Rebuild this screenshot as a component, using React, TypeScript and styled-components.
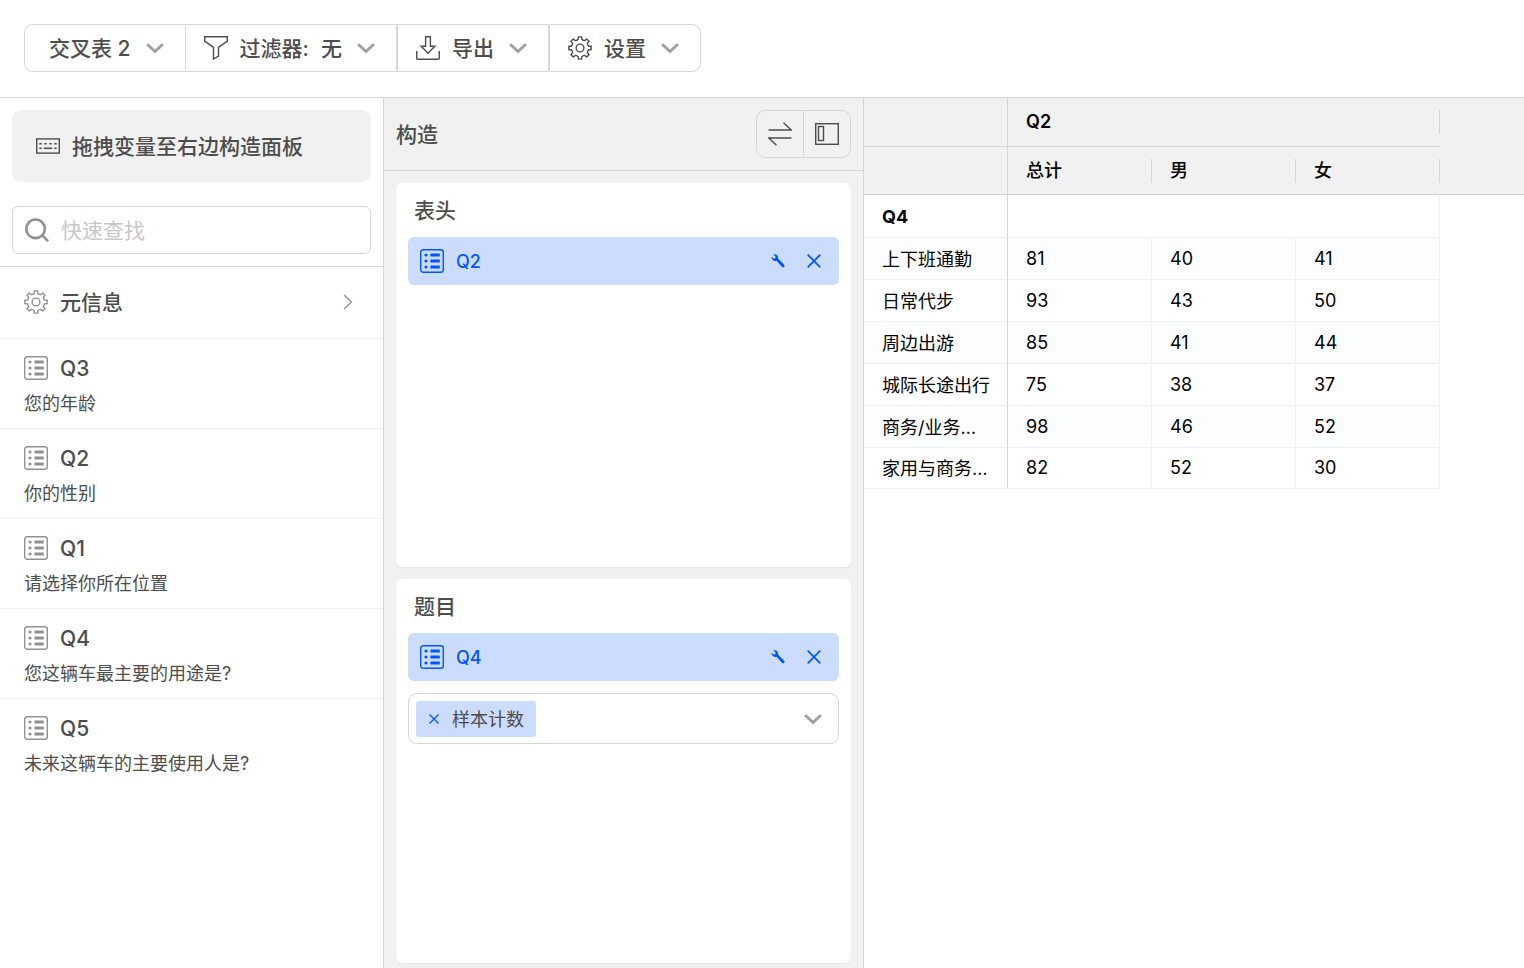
import React from "react";
import styled, { createGlobalStyle } from "styled-components";

const line = "#d6d6d6";
const softLine = "#f0f0f0";
const panelGrey = "#f1f1f1";
const ink = "#4d4d4d";
const muted = "#919191";
const accent = "#0055ff";
const accentSoft = "#ccdcff";

const GlobalStyle = createGlobalStyle`
  *, *::before, *::after { box-sizing: border-box; }
  body {
    margin: 0;
    background: #fff;
    color: ${ink};
    font-family: Inter, "Noto Sans CJK SC", sans-serif;
    font-size: 18px;
    line-height: 24px;
  }
  button, input { font: inherit; color: inherit; }
  button { margin: 0; padding: 0; border: 0; background: none; cursor: pointer; }
  svg { display: block; flex: none; }
`;

/* ---------- icons ---------- */

const gearPath = (() => {
  const teeth = 8;
  const parts: string[] = [];
  const point = (angle: number, radius: number) =>
    `${(12 + radius * Math.sin(angle)).toFixed(2)} ${(12 - radius * Math.cos(angle)).toFixed(2)}`;
  for (let i = 0; i < teeth; i++) {
    const a = (i * 2 * Math.PI) / teeth;
    parts.push(`${i ? "L" : "M"}${point(a - 0.2, 8.9)}`);
    parts.push(`L${point(a - 0.15, 11.3)}`);
    parts.push(`L${point(a + 0.15, 11.3)}`);
    parts.push(`L${point(a + 0.2, 8.9)}`);
    const next = a + (2 * Math.PI) / teeth;
    parts.push(`Q${point((a + next) / 2, 7.9)} ${point(next - 0.2, 8.9)}`);
  }
  return parts.join("") + "Z";
})();

const GearIcon = () => (
  <svg width="24" height="24" viewBox="0 0 24 24" fill="none" stroke="currentColor" strokeWidth="1.400" aria-hidden="true">
    <path d={gearPath} strokeLinejoin="round" />
    <circle cx="12" cy="12" r="3.900" />
  </svg>
);

const ChevronIcon = () => (
  <svg width="18" height="12" viewBox="0 0 18 12" fill="none" stroke="#a0a0a0" strokeWidth="3" aria-hidden="true">
    <path d="M2 3L9 9.500L16 3" strokeLinecap="round" />
  </svg>
);

const FunnelIcon = () => (
  <svg width="24" height="24" viewBox="0 0 24 24" fill="none" stroke="currentColor" strokeWidth="1.400" aria-hidden="true">
    <path d="M.7 .7H23.300V5.100L14.500 11.400V20L9.500 23V11.400L.7 5.100Z" />
  </svg>
);

const DownloadIcon = () => (
  <svg width="24" height="24" viewBox="0 0 24 24" fill="none" stroke="currentColor" strokeWidth="1.400" aria-hidden="true">
    <path d="M9.600 .7H14.400V10.200H18.800L12 17.200L5.200 10.200H9.600Z" />
    <path d="M.7 15V22.300Q.7 23.300 1.700 23.300H22.300Q23.300 23.300 23.300 22.300V15" />
  </svg>
);

const KeyboardIcon = () => (
  <svg width="24" height="16" viewBox="0 0 24 16" fill="none" stroke="currentColor" strokeWidth="1.400" aria-hidden="true">
    <rect x=".7" y=".9" width="22.600" height="14.200" />
    <path d="M3.300 5.700H5.700M8.300 5.700H10.700M13.300 5.700H15.700M18.300 5.700H20.700M3.300 10.200H5.700M7.800 10.200H16.200M18.300 10.200H20.700" />
  </svg>
);

const SearchIcon = () => (
  <svg width="24" height="24" viewBox="0 0 24 24" fill="none" stroke={muted} strokeWidth="2.600" aria-hidden="true">
    <circle cx="10.600" cy="10.800" r="9.300" />
    <path d="M17.200 17.400L23.200 23.200" />
  </svg>
);

const ListIcon = () => (
  <svg width="24" height="24" viewBox="0 0 24 24" fill="none" stroke="currentColor" aria-hidden="true">
    <rect x=".7" y=".7" width="22.600" height="22.600" rx="2.600" strokeWidth="1.400" />
    <g fill="currentColor" stroke="none">
      <circle cx="6" cy="6" r="1.600" />
      <circle cx="6" cy="12" r="1.600" />
      <circle cx="6" cy="18" r="1.600" />
      <rect x="10.400" y="4.600" width="9.400" height="2.800" rx=".5" />
      <rect x="10.400" y="10.600" width="9.400" height="2.800" rx=".5" />
      <rect x="10.400" y="16.600" width="9.400" height="2.800" rx=".5" />
    </g>
  </svg>
);

const ArrowRightIcon = () => (
  <svg width="10" height="16" viewBox="0 0 10 16" fill="none" stroke={muted} strokeWidth="1.400" aria-hidden="true">
    <path d="M1 1L8.500 8L1 15" />
  </svg>
);

const SwapIcon = () => (
  <svg width="24" height="24" viewBox="0 0 24 24" fill="none" stroke="currentColor" strokeWidth="1.400" aria-hidden="true">
    <path d="M.5 8H23.200L15.500 .8M23.500 16H.8L8.500 23.200" />
  </svg>
);

const PanelIcon = () => (
  <svg width="24" height="24" viewBox="0 0 24 24" fill="none" stroke="currentColor" aria-hidden="true">
    <rect x=".7" y="1.700" width="22.600" height="20.600" strokeWidth="1.400" />
    <rect x="3.500" y="4.500" width="5" height="14" strokeWidth="1.400" />
  </svg>
);

const WrenchIcon = () => (
  <svg width="14" height="14" viewBox="0 0 14 14" aria-hidden="true">
    <path
      d="M2.300 .6Q4.600 -.2 6.200 1.400Q7.400 2.800 7 4.600L13.100 10.700Q14 11.700 13.200 12.800Q12.200 13.800 11.100 12.900L5.500 6.700Q3.600 7.300 1.900 6Q.2 4.700 .4 2.700L2.500 4.400L4.300 4.200L4.500 2.400Z"
      fill="currentColor"
    />
  </svg>
);

const CrossIcon = ({ size }: { size: number }) => (
  <svg width={size} height={size} viewBox="0 0 14 14" fill="none" stroke="currentColor" strokeWidth="1.700" aria-hidden="true">
    <path d="M.7 .7L13.300 13.300M13.300 .7L.7 13.300" />
  </svg>
);

/* ---------- layout ---------- */

const Page = styled.div`
  display: flex;
  flex-direction: column;
  min-height: 100vh;
`;

/* Optical centring of text beside an icon. */
const Label = styled.span`
  padding-top: 2px;
`;

const TopBar = styled.header`
  display: flex;
  padding: 24px 24px 25px;
  border-bottom: 1px solid ${line};
`;

const ToolButton = styled.button<{ $wide?: boolean; $joined?: boolean }>`
  display: flex;
  align-items: center;
  gap: 12px;
  height: 48px;
  padding: 0 21px 0 ${(p) => (p.$wide ? 24 : 18)}px;
  border: 1px solid ${line};
  border-left-width: ${(p) => (p.$joined ? 0 : 1)}px;
  font-size: 21px;
  font-weight: 500;
  white-space: nowrap;

  &:first-child { border-radius: 9px 0 0 9px; }
  &:last-child { border-radius: 0 9px 9px 0; }
  > svg:last-child { margin-left: 3px; }
`;

const Columns = styled.main`
  display: flex;
  flex: 1;
`;

const Sidebar = styled.aside`
  flex: none;
  width: 384px;
  border-right: 1px solid ${line};
`;

const SidebarTop = styled.div`
  display: flex;
  flex-direction: column;
  gap: 24px;
  padding: 12px;
  border-bottom: 1px solid ${line};
`;

const Hint = styled.div`
  display: flex;
  align-items: center;
  gap: 12px;
  height: 72px;
  padding: 0 24px;
  border-radius: 9px;
  background: ${panelGrey};
  font-size: 21px;
  font-weight: 500;
`;

const SearchBox = styled.label`
  display: flex;
  align-items: center;
  gap: 12px;
  height: 48px;
  padding: 0 12px;
  border: 1px solid ${line};
  border-radius: 6px;
`;

const SearchInput = styled.input`
  flex: 1;
  min-width: 0;
  padding: 2px 0 0;
  border: 0;
  outline: 0;
  background: none;
  font-size: 21px;
  line-height: 30px;
  &::placeholder { color: #c8c8c8; opacity: 1; }
`;

const MetaRow = styled.button`
  display: flex;
  align-items: center;
  gap: 12px;
  width: 100%;
  height: 72px;
  padding: 0 30px 1px 24px;
  border-bottom: 1px solid ${softLine};
  font-size: 21px;
  font-weight: 500;
  > svg:first-child { color: ${muted}; }
  > svg:last-child { margin-left: auto; }
`;

const QuestionList = styled.ul`
  margin: 0;
  padding: 0;
  list-style: none;
`;

const QuestionItem = styled.li`
  padding: 14px 24px 12px;
  border-bottom: 1px solid ${softLine};
  &:last-child { border-bottom: 0; }
`;

const QuestionName = styled.div`
  display: flex;
  align-items: center;
  gap: 12px;
  height: 30px;
  margin-bottom: 9px;
  font-size: 21px;
  font-weight: 500;
  > svg { color: ${muted}; }
`;

const Builder = styled.section`
  display: flex;
  flex-direction: column;
  flex: none;
  width: 480px;
  border-right: 1px solid ${line};
  background: ${panelGrey};
`;

const BuilderHeader = styled.div`
  display: flex;
  align-items: center;
  justify-content: space-between;
  padding: 12px;
  border-bottom: 1px solid ${line};
`;

const Heading = styled.h2`
  margin: 0;
  padding-top: 2px;
  font-size: 21px;
  font-weight: 500;
  line-height: 28px;
`;

const IconPair = styled.div`
  display: flex;
  height: 48px;
  border: 1px solid ${line};
  border-radius: 9px;
`;

const PairButton = styled.button`
  display: flex;
  align-items: center;
  justify-content: center;
  width: 46px;
  & + & {
    width: 47px;
    border-left: 1px solid ${line};
  }
`;

const Cards = styled.div`
  display: flex;
  flex: 1;
  flex-direction: column;
  gap: 12px;
  padding: 12px 12px 5px;
`;

const Card = styled.section`
  display: flex;
  flex: 1;
  flex-direction: column;
  min-height: 384px;
  padding: 12px;
  border-radius: 6px;
  background: #fff;
  box-shadow: 0 1px 2px rgba(0, 0, 0, 0.06);
  gap: 12px;
`;

const CardTitle = styled(Heading)`
  padding-left: 6px;
`;

const Pill = styled.div`
  display: flex;
  align-items: center;
  gap: 12px;
  height: 48px;
  padding: 0 13px 0 12px;
  border-radius: 6px;
  background: ${accentSoft};
  color: ${accent};
  font-weight: 500;
`;

const PillName = styled(Label)`
  flex: 1;
`;

const PillAction = styled.button`
  display: grid;
  place-items: center;
  width: 24px;
  height: 24px;
`;

const TagBox = styled.div`
  display: flex;
  align-items: center;
  justify-content: space-between;
  padding: 7px 16px 6px 7px;
  border: 1px solid ${line};
  border-radius: 9px;
`;

const Tag = styled.span`
  display: flex;
  align-items: center;
  gap: 12px;
  height: 36px;
  padding: 0 12px;
  border-radius: 3px;
  background: ${accentSoft};
  > button {
    display: grid;
    place-items: center;
    width: 12px;
    height: 24px;
    color: ${accent};
  }
`;

/* ---------- result table ---------- */

const Results = styled.section`
  flex: 1;
  min-width: 0;
`;

const Table = styled.table`
  width: 100%;
  table-layout: fixed;
  border-collapse: separate;
  border-spacing: 0;
  color: #000;
`;

const DataCol = styled.col`
  width: 144px;
`;

const HeadCell = styled.th<{ $stub?: boolean; $tall?: boolean; $rest?: boolean }>`
  height: ${(p) => (p.$tall ? 49 : 48)}px;
  padding: 0 18px;
  border-bottom: 1px solid ${line};
  border-right: ${(p) => (p.$stub ? `1px solid ${line}` : "0")};
  background: ${(p) =>
    p.$stub || p.$rest
      ? panelGrey
      : `linear-gradient(${line}, ${line}) right center / 1px 24px no-repeat ${panelGrey}`};
  font-weight: ${(p) => (p.$tall ? 600 : 500)};
  text-align: left;
`;

const RowHead = styled.th<{ $strong?: boolean; $tint?: boolean }>`
  height: ${(p) => (p.$strong ? 43 : 42)}px;
  padding: 2px 0 0 18px;
  border-right: 1px solid ${line};
  border-bottom: 1px solid ${softLine};
  background: ${(p) => (p.$tint ? "#fcfdff" : "#fff")};
  font-weight: ${(p) => (p.$strong ? 700 : 400)};
  text-align: left;
  white-space: nowrap;
  tr:last-child > & { height: 41px; }
`;

const Cell = styled.td<{ $tint?: boolean }>`
  padding: 0 18px;
  border-bottom: 1px solid ${softLine};
  background: linear-gradient(${softLine}, ${softLine}) right bottom / 1px calc(100% - 1px) no-repeat
    ${(p) => (p.$tint ? "#fcfdff" : "#fff")};
`;

const questions = [
  { name: "Q3", text: "您的年龄" },
  { name: "Q2", text: "你的性别" },
  { name: "Q1", text: "请选择你所在位置" },
  { name: "Q4", text: "您这辆车最主要的用途是?" },
  { name: "Q5", text: "未来这辆车的主要使用人是?" },
];

const rows: [string, number, number, number][] = [
  ["上下班通勤", 81, 40, 41],
  ["日常代步", 93, 43, 50],
  ["周边出游", 85, 41, 44],
  ["城际长途出行", 75, 38, 37],
  ["商务/业务…", 98, 46, 52],
  ["家用与商务…", 82, 52, 30],
];

const VariablePill = ({ name }: { name: string }) => (
  <Pill>
    <ListIcon />
    <PillName>{name}</PillName>
    <PillAction aria-label={`设置 ${name}`}>
      <WrenchIcon />
    </PillAction>
    <PillAction aria-label={`移除 ${name}`}>
      <CrossIcon size={14} />
    </PillAction>
  </Pill>
);

export default function App() {
  return (
    <Page>
      <GlobalStyle />
      <TopBar>
        <ToolButton $wide aria-haspopup="menu">
          <Label>交叉表 2</Label>
          <ChevronIcon />
        </ToolButton>
        <ToolButton $joined aria-haspopup="menu">
          <FunnelIcon />
          <Label>过滤器:</Label>
          <Label>无</Label>
          <ChevronIcon />
        </ToolButton>
        <ToolButton aria-haspopup="menu">
          <DownloadIcon />
          <Label>导出</Label>
          <ChevronIcon />
        </ToolButton>
        <ToolButton aria-haspopup="menu">
          <GearIcon />
          <Label>设置</Label>
          <ChevronIcon />
        </ToolButton>
      </TopBar>

      <Columns>
        <Sidebar>
          <SidebarTop>
            <Hint>
              <KeyboardIcon />
              <Label>拖拽变量至右边构造面板</Label>
            </Hint>
            <SearchBox>
              <SearchIcon />
              <SearchInput type="text" placeholder="快速查找" aria-label="快速查找" />
            </SearchBox>
          </SidebarTop>
          <MetaRow>
            <GearIcon />
            <Label>元信息</Label>
            <ArrowRightIcon />
          </MetaRow>
          <QuestionList>
            {questions.map((q) => (
              <QuestionItem key={q.name}>
                <QuestionName>
                  <ListIcon />
                  <Label>{q.name}</Label>
                </QuestionName>
                {q.text}
              </QuestionItem>
            ))}
          </QuestionList>
        </Sidebar>

        <Builder>
          <BuilderHeader>
            <Heading>构造</Heading>
            <IconPair>
              <PairButton aria-label="交换行列">
                <SwapIcon />
              </PairButton>
              <PairButton aria-label="切换面板">
                <PanelIcon />
              </PairButton>
            </IconPair>
          </BuilderHeader>
          <Cards>
            <Card>
              <CardTitle>表头</CardTitle>
              <VariablePill name="Q2" />
            </Card>
            <Card>
              <CardTitle>题目</CardTitle>
              <VariablePill name="Q4" />
              <TagBox>
                <Tag>
                  <button aria-label="移除 样本计数">
                    <CrossIcon size={10} />
                  </button>
                  <Label>样本计数</Label>
                </Tag>
                <button aria-label="选择指标" aria-haspopup="listbox">
                  <ChevronIcon />
                </button>
              </TagBox>
            </Card>
          </Cards>
        </Builder>

        <Results>
          <Table>
            <colgroup>
              <DataCol />
              <DataCol />
              <DataCol />
              <DataCol />
              <col />
            </colgroup>
            <thead>
              <tr>
                <HeadCell $stub $tall />
                <HeadCell $tall colSpan={3}>Q2</HeadCell>
                <HeadCell $rest rowSpan={2} />
              </tr>
              <tr>
                <HeadCell $stub />
                <HeadCell>总计</HeadCell>
                <HeadCell>男</HeadCell>
                <HeadCell>女</HeadCell>
              </tr>
            </thead>
            <tbody>
              <tr>
                <RowHead $strong>Q4</RowHead>
                <Cell colSpan={3} />
              </tr>
              {rows.map(([label, ...values], i) => (
                <tr key={label}>
                  <RowHead $tint={i % 2 === 0} scope="row">{label}</RowHead>
                  {values.map((value, j) => (
                    <Cell key={j} $tint={i % 2 === 0}>{value}</Cell>
                  ))}
                </tr>
              ))}
            </tbody>
          </Table>
        </Results>
      </Columns>
    </Page>
  );
}
